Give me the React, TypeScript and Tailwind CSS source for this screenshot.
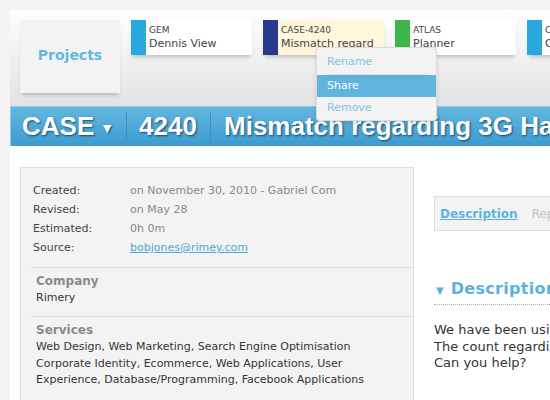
const tabs = [
  { code: 'GEM', name: 'Dennis View', bar: 'bg-[#29a8e0]', bg: 'bg-white' },
  { code: 'CASE-4240', name: 'Mismatch regard', bar: 'bg-[#283a8e]', bg: 'bg-[#fff7dc]', menu: true },
  { code: 'ATLAS', name: 'Planner', bar: 'bg-[#3db54a]', bg: 'bg-white' },
  { code: 'CRM', name: 'Contacts', bar: 'bg-[#29a8e0]', bg: 'bg-white' },
];

const details = [
  ['Created:', 'on November 30, 2010 - Gabriel Com'],
  ['Revised:', 'on May 28'],
  ['Estimated:', '0h 0m'],
];

const ContextMenu = () => (
  <div className="absolute left-[53px] top-[27px] z-10 w-[121px] h-[74px] rounded-[3px] border border-[#dcdcdc] bg-[#f3f3f3] shadow-[0_2px_4px_rgba(0,0,0,0.12)] text-[11px] text-[#7fc3e6] leading-[22px]">
    <div className="pl-[10px] pt-[3px] h-[26px]">Rename</div>
    <div className="mx-[9px] border-t border-[#dcdcdc]" />
    <div className="pl-[10px] h-[22px] bg-[#61b4dc] text-white">Share</div>
    <div className="pl-[10px] h-[22px]">Remove</div>
  </div>
);

const ProjectTab = ({ code, name, bar, bg, menu }: { code: string; name: string; bar: string; bg: string; menu?: boolean }) => (
  <div className={`relative flex w-[121px] h-[35px] shrink-0 ${bg} shadow-[0_4px_4px_-2px_rgba(0,0,0,0.22)]`}>
    <div className={`w-[15px] h-full ${bar}`} />
    <div className="pl-[3px] pt-[4px] text-[#444] overflow-hidden">
      <div className="text-[9px] leading-[12px]">{code}</div>
      <div className="text-[11px] leading-[15px] whitespace-nowrap">{name}</div>
    </div>
    {menu && <ContextMenu />}
  </div>
);

export default function App() {
  return (
    <div className="w-[550px] h-[400px] overflow-hidden bg-[#f4f4f4] pt-[10px] pl-[10px] font-['DejaVu_Sans',sans-serif]">
      <div className="w-[620px] h-[400px] bg-white">
        {/* project strip */}
        <div className="h-[96px] pt-[10px] pl-[10px] flex gap-[11px] bg-gradient-to-b from-[#fefefe] to-[#e2e2e2]">
          <div className="w-[100px] h-[73px] shrink-0 flex items-center justify-center bg-[#f3f3f3] shadow-[0_4px_4px_-2px_rgba(0,0,0,0.2)] text-[14px] font-bold text-[#64b9e0]">
            <span className="-mt-[2px]">Projects</span>
          </div>
          {tabs.map((t) => (
            <ProjectTab key={t.code} {...t} />
          ))}
        </div>

        {/* case header */}
        <div className="h-[40px] flex items-center overflow-hidden bg-gradient-to-b from-[#63b7df] to-[#3b9bcf] border-t border-l border-[#8ccbe9] text-white font-bold text-[26px] font-['Liberation_Sans',Arial,sans-serif] [text-shadow:1px_1px_2px_rgba(0,40,80,0.75)] whitespace-nowrap">
          <div className="w-[115px] shrink-0 pl-[11px] flex items-center gap-[6px]">
            CASE <span className="text-[14px] mt-[3px]">▼</span>
          </div>
          <div className="h-[29px] shrink-0 border-l border-[#3a8fc2] shadow-[inset_1px_0_0_#73bfe4]" />
          <div className="w-[83px] shrink-0 pl-[12px]">4240</div>
          <div className="h-[29px] shrink-0 border-l border-[#3a8fc2] shadow-[inset_1px_0_0_#73bfe4]" />
          <div className="shrink-0 pl-[13px]">Mismatch regarding 3G Handset count</div>
        </div>

        {/* content */}
        <div className="flex pt-[21px] pl-[10px]">
          <div className="w-[394px] shrink-0 border border-[#dedede] bg-[#f3f3f3] text-[11px]">
            <div className="pt-[13px] pl-[12px] pb-[10px] leading-[19px]">
              {details.map(([k, v]) => (
                <div key={k} className="flex">
                  <div className="w-[97px] text-[#444]">{k}</div>
                  <div className="text-[#888] whitespace-nowrap">{v}</div>
                </div>
              ))}
              <div className="flex">
                <div className="w-[97px] text-[#444]">Source:</div>
                <a className="text-[#4aa9d6] underline">bobjones@rimey.com</a>
              </div>
            </div>
            <div className="ml-[10px] border-t border-[#dedede]" />
            <div className="pl-[15px] pt-[5px] pb-[10px] leading-[16.5px] text-[#333]">
              <div className="text-[12px] font-bold text-[#8a8a8a]">Company</div>
              <div>Rimery</div>
            </div>
            <div className="ml-[10px] border-t border-[#dedede]" />
            <div className="pl-[15px] pt-[6px] pb-[11px] pr-[20px] leading-[16.5px] text-[#333]">
              <div className="text-[12px] font-bold text-[#8a8a8a] leading-[15px] mb-[1px]">Services</div>
              <div>
                Web Design, Web Marketing, Search Engine Optimisation Corporate Identity, Ecommerce, Web Applications, User
                Experience, Database/Programming, Facebook Applications
              </div>
            </div>
            <div className="ml-[10px] border-t border-[#dedede]" />
            <div className="h-[40px]" />
          </div>

          <div className="ml-[20px] pt-[29px] w-[200px] shrink-0">
            <div className="h-[35px] flex items-center gap-[14px] pl-[5px] border border-[#dedede] bg-[#f3f3f3] text-[12px] font-bold">
              <span className="text-[#5ab4dd] underline">Description</span>
              <span className="text-[#c4c4c4] font-normal">Replies</span>
            </div>
            <div className="mt-[46px] pb-[3px] flex items-center gap-[7px] border-b border-dotted border-[#aaa] whitespace-nowrap">
              <span className="text-[10px] text-[#5ab4dd] ml-[2px] mt-[3px]">▼</span>
              <span className="text-[16px] font-bold text-[#5ab4dd] tracking-[0.3px]">Description</span>
            </div>
            <div className="mt-[17px] text-[13px] leading-[16.5px] text-[#333] whitespace-nowrap">
              <div>We have been using the system</div>
              <div>The count regarding handsets</div>
              <div>Can you help?</div>
            </div>
          </div>
        </div>
      </div>
    </div>
  );
}
